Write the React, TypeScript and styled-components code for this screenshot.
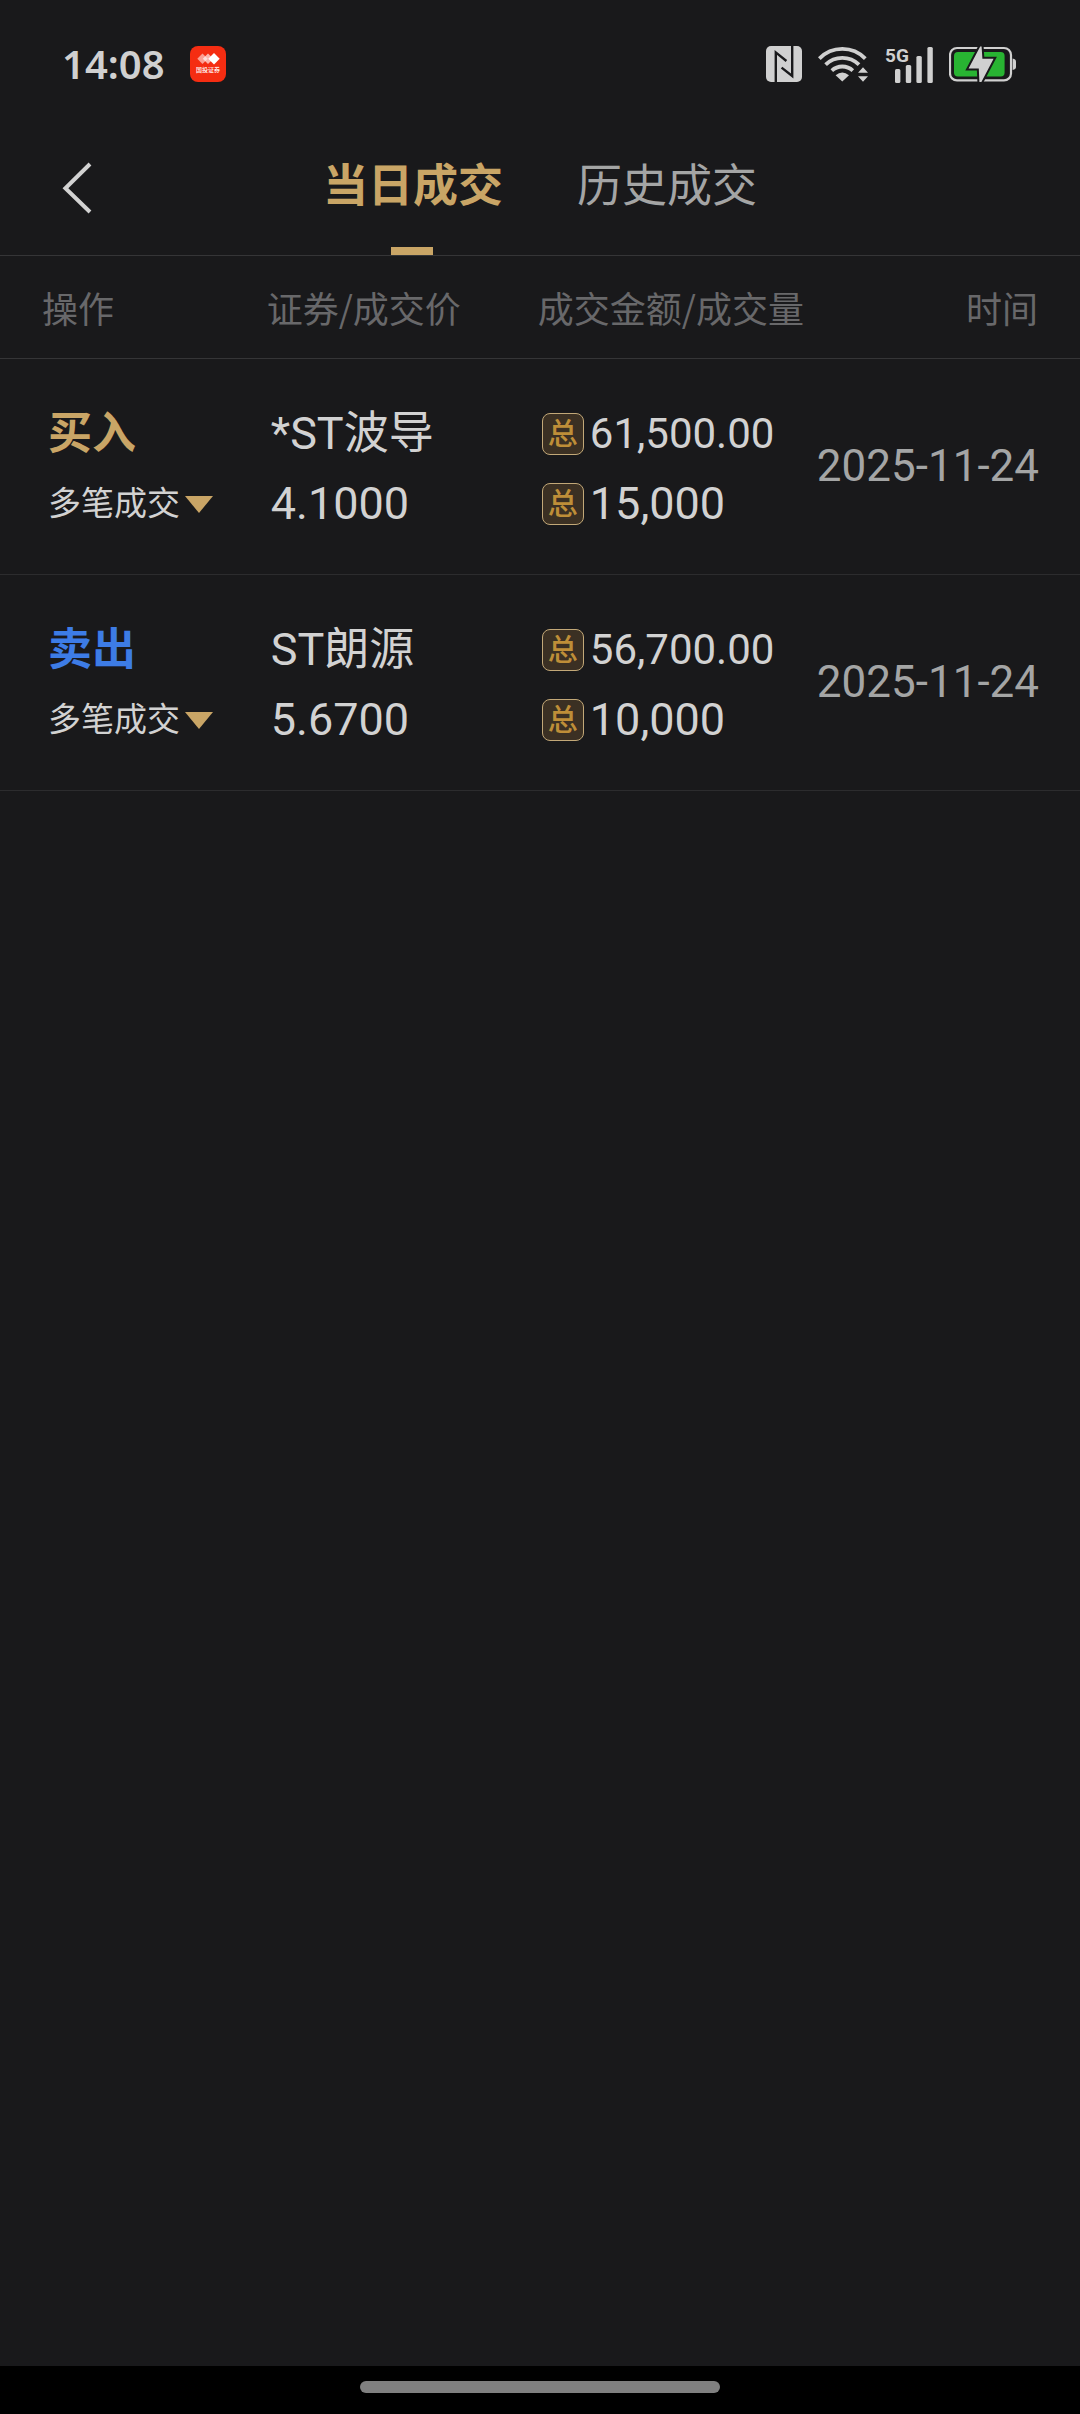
import React from "react";
import styled, { createGlobalStyle } from "styled-components";

const color = {
  bg: "#19191b",
  line: "#353537",
  rowLine: "#2c2c2e",
  gold: "#c9a566",
  blue: "#3d7ce6",
  text: "#d2d2d2",
  soft: "#a4a5a5",
  muted: "#68686a",
};

const GlobalStyle = createGlobalStyle`
  *, *::before, *::after { box-sizing: border-box; }
  body {
    margin: 0;
    background: ${color.bg};
    color: ${color.text};
    font-family: Roboto, "Noto Sans CJK SC", sans-serif;
  }
  button {
    margin: 0;
    padding: 0;
    border: 0;
    background: none;
    color: inherit;
    font: inherit;
    cursor: pointer;
  }
`;

const Screen = styled.div`
  display: flex;
  flex-direction: column;
  min-height: 100vh;
`;

const StatusBar = styled.div`
  display: flex;
  align-items: center;
  height: 128px;
  padding: 0 64px 0 62px;
`;

const Clock = styled.time`
  margin-right: 25px;
  color: #d0d0d0;
  font: 600 40px/56px "Noto Sans", sans-serif;
`;

const StatusIcons = styled.div`
  display: flex;
  align-items: center;
  gap: 16px;
  margin-left: auto;
`;

const TopBar = styled.header`
  display: grid;
  grid-template-columns: 1fr auto 1fr;
  height: 128px;
  border-bottom: 1px solid ${color.line};
`;

const BackButton = styled.button`
  display: flex;
  align-items: center;
  justify-self: start;
  padding: 0 40px 8px 62px;
`;

const Tabs = styled.div`
  display: flex;
  gap: 74px;
`;

const Tab = styled.button<{ $active?: boolean }>`
  position: relative;
  padding-bottom: 18px;
  color: ${(p) => (p.$active ? color.gold : color.soft)};
  font-size: 45px;
  font-weight: ${(p) => (p.$active ? 700 : 400)};

  &::after {
    content: "";
    display: ${(p) => (p.$active ? "block" : "none")};
    position: absolute;
    bottom: 0;
    left: 50%;
    width: 42px;
    height: 8px;
    margin-left: -22px;
    background: ${color.gold};
  }
`;

const Content = styled.main`
  flex: 1;
`;

const Table = styled.table`
  width: 100%;
  border-collapse: separate;
  border-spacing: 0;
  table-layout: fixed;
`;

const HeadCell = styled.th<{ $width?: string }>`
  width: ${(p) => p.$width ?? "auto"};
  height: 103px;
  padding: 0;
  border-bottom: 1px solid ${color.line};
  color: ${color.muted};
  font: 400 36px/48px "Noto Sans CJK SC", sans-serif;
  text-align: left;
  white-space: nowrap;

  &:first-child { padding-left: 42px; }
  &:last-child { padding-right: 42px; text-align: right; }
`;

const Cell = styled.td`
  height: 216px;
  padding: 5px 0 0 4px;
  border-bottom: 1px solid ${color.rowLine};
  white-space: nowrap;

  &:first-child { padding-left: 48px; }
  &:last-child {
    padding: 0 41px 2px 0;
    color: ${color.soft};
    font-size: 44px;
    text-align: right;
  }
`;

const Line = styled.div<{ $size?: number }>`
  display: flex;
  align-items: center;
  height: 70px;
  font-size: ${(p) => p.$size ?? 45}px;
  line-height: 70px;
`;

const Side = styled.strong<{ $sell?: boolean }>`
  color: ${(p) => (p.$sell ? color.blue : color.gold)};
  font-size: 44px;
  font-weight: 700;
`;

const Expand = styled.button`
  display: flex;
  align-items: center;
  gap: 5px;
  color: ${color.text};
  font-size: 33px;
`;

const TotalBadge = styled.span`
  display: flex;
  align-items: center;
  justify-content: center;
  width: 42px;
  height: 42px;
  margin-right: 6px;
  border: 1px solid #c2a878;
  border-radius: 8px;
  background: #3b3023;
  color: #be8e38;
  font-size: 30px;
  font-weight: 500;
  line-height: 40px;
`;

const GestureBar = styled.footer`
  display: flex;
  justify-content: center;
  height: 48px;
  padding-top: 15px;
  background: #000;
`;

const GesturePill = styled.div`
  width: 33.333%;
  height: 12px;
  border-radius: 6px;
  background: #808080;
`;

const AppBadge = () => (
  <svg width="36" height="36" viewBox="0 0 36 36" role="img" aria-label="国投证券">
    <rect width="36" height="36" rx="8" fill="#f52d12" />
    <path d="M12.5 7.5l5.2 5.2-5.2 5.2-5.2-5.2z" fill="#fff" opacity="0.55" />
    <path d="M18 7.5l5.2 5.2-5.2 5.2-5.2-5.2z" fill="#fff" opacity="0.65" />
    <path d="M24 7l5.7 5.7-5.7 5.7-5.7-5.7z" fill="#fff" />
    <text x="18" y="26" fill="#fff" fontSize="6" fontWeight="500" textAnchor="middle" fontFamily="Noto Sans CJK SC, sans-serif">
      国投证券
    </text>
  </svg>
);

const NfcIcon = () => (
  <svg width="36" height="36" viewBox="0 0 36 36" aria-hidden="true">
    <rect width="36" height="36" rx="5" fill="#d0d0d0" />
    <g fill="none" stroke={color.bg} strokeWidth="2.4">
      <path d="M9.8 36V6.4L20.4 15" />
      <path d="M26.2 0v30L15.6 21.6" />
    </g>
  </svg>
);

const WifiIcon = () => (
  <svg width="51" height="36" viewBox="0 0 51 36" aria-hidden="true">
    <g fill="none" stroke="#d0d0d0" strokeWidth="3.8">
      <path d="M1.3 12.6A32 32 0 0 1 47.3 12.6" />
      <path d="M7.6 18.6A24 24 0 0 1 41 18.6" />
      <path d="M13.8 24.6A15.5 15.5 0 0 1 34.8 24.6" />
    </g>
    <path d="M17.6 29.2Q24.3 23.6 31 29.2L24.3 35.6z" fill="#d0d0d0" />
    <path d="M40 26.8l5-5.6 5 5.6zM40 30.2h10l-5 5.6z" fill="#d0d0d0" />
  </svg>
);

const SignalIcon = () => (
  <svg width="48" height="38" viewBox="0 0 48 38" role="img" aria-label="5G">
    <text x="0" y="17" fill="#d0d0d0" fontSize="19" fontWeight="700" fontFamily="Roboto, sans-serif">
      5G
    </text>
    <g fill="#d0d0d0">
      <rect x="10" y="24" width="5.4" height="14" rx="1.5" />
      <rect x="20.8" y="20" width="5.4" height="18" rx="1.5" />
      <rect x="31.4" y="11" width="5.4" height="27" rx="1.5" />
      <rect x="42.4" y="2" width="5.4" height="36" rx="1.5" />
    </g>
  </svg>
);

const BatteryIcon = () => (
  <svg width="67" height="38" viewBox="0 0 67 38" aria-hidden="true">
    <rect x="1" y="3" width="61" height="32.4" rx="7" fill="none" stroke="#d0d0d0" strokeWidth="2.2" />
    <rect x="5" y="7" width="50.6" height="24.4" rx="4" fill="#28b432" />
    <path d="M63.6 13.4q3.4.6 3.4 3v5.6q0 2.4-3.4 3z" fill="#d0d0d0" />
    <path
      d="M31.2 1.4L19.6 23.6h10.2l.6 13.4h2L44.6 13.8H33.4l-.8-12.4z"
      fill="#d0d0d0"
      stroke={color.bg}
      strokeWidth="4"
      paintOrder="stroke"
    />
  </svg>
);

const BackIcon = () => (
  <svg width="30" height="52" viewBox="0 0 30 52" fill="none" aria-hidden="true">
    <path d="M28 2L3.4 26.2L28 50" stroke="#d2d2d2" strokeWidth="4" />
  </svg>
);

const DownTriangle = () => (
  <svg width="28" height="17" viewBox="0 0 28 17" aria-hidden="true">
    <path d="M0 0h28L14 17z" fill={color.gold} />
  </svg>
);

const trades = [
  { side: "买入", sell: false, name: "*ST波导", price: "4.1000", amount: "61,500.00", volume: "15,000", date: "2025-11-24" },
  { side: "卖出", sell: true, name: "ST朗源", price: "5.6700", amount: "56,700.00", volume: "10,000", date: "2025-11-24" },
];

export default function App() {
  return (
    <Screen>
      <GlobalStyle />
      <StatusBar>
        <Clock>14:08</Clock>
        <AppBadge />
        <StatusIcons>
          <NfcIcon />
          <WifiIcon />
          <SignalIcon />
          <BatteryIcon />
        </StatusIcons>
      </StatusBar>
      <TopBar>
        <BackButton type="button" aria-label="返回">
          <BackIcon />
        </BackButton>
        <Tabs role="tablist">
          <Tab type="button" role="tab" aria-selected="true" $active>
            当日成交
          </Tab>
          <Tab type="button" role="tab" aria-selected="false">
            历史成交
          </Tab>
        </Tabs>
      </TopBar>
      <Content>
        <Table>
          <thead>
            <tr>
              <HeadCell scope="col" $width="24.7%">操作</HeadCell>
              <HeadCell scope="col" $width="25.1%">证券/成交价</HeadCell>
              <HeadCell scope="col" $width="25.2%">成交金额/成交量</HeadCell>
              <HeadCell scope="col">时间</HeadCell>
            </tr>
          </thead>
          <tbody>
            {trades.map((t) => (
              <tr key={t.name}>
                <Cell>
                  <Line>
                    <Side $sell={t.sell}>{t.side}</Side>
                  </Line>
                  <Line>
                    <Expand type="button">
                      多笔成交
                      <DownTriangle />
                    </Expand>
                  </Line>
                </Cell>
                <Cell>
                  <Line>{t.name}</Line>
                  <Line>{t.price}</Line>
                </Cell>
                <Cell>
                  <Line $size={42}>
                    <TotalBadge>总</TotalBadge>
                    {t.amount}
                  </Line>
                  <Line>
                    <TotalBadge>总</TotalBadge>
                    {t.volume}
                  </Line>
                </Cell>
                <Cell>{t.date}</Cell>
              </tr>
            ))}
          </tbody>
        </Table>
      </Content>
      <GestureBar>
        <GesturePill />
      </GestureBar>
    </Screen>
  );
}
